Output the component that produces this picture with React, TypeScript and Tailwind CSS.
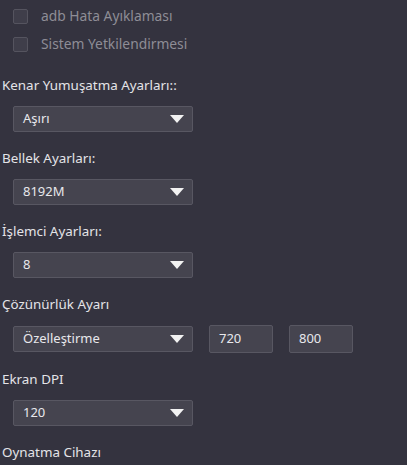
import React from 'react';

const font = { fontFamily: '"Noto Sans", "Open Sans", sans-serif' };

function Arrow() {
  return (
    <svg width="14" height="8" viewBox="0 0 14 8" className="shrink-0">
      <path d="M0 0 L14 0 L7 8 Z" fill="#f2f2f2" />
    </svg>
  );
}

function Select({ value }: { value: string }) {
  return (
    <div className="w-[180px] h-[26px] bg-[#45444f] border border-[#585762] rounded-[2px] flex items-center justify-between pl-[9px] pr-[8px]">
      <span className="text-[13px] text-[#e8e8ec]">{value}</span>
      <Arrow />
    </div>
  );
}

function Check({ label }: { label: string }) {
  return (
    <div className="flex items-center h-[16px] gap-[13px] pl-[13px]">
      <div className="w-[15px] h-[15px] rounded-[2px] bg-[#3f3e4a] border border-[#55545f]" />
      <span className="text-[13.8px] text-[#8e8d96]">{label}</span>
    </div>
  );
}

function Field({ label, children }: { label: string; children: React.ReactNode }) {
  return (
    <div className="flex flex-col">
      <div className="h-[18px] flex items-center pl-[2px] text-[13.4px] text-[#e4e4e8]">{label}</div>
      <div className="pl-[13px] pt-[12px] pb-[17px]">{children}</div>
    </div>
  );
}

function NumBox({ value }: { value: string }) {
  return (
    <div className="w-[64px] h-[28px] bg-[#45444f] border border-[#585762] rounded-[2px] flex items-center pl-[9px] text-[13px] text-[#e8e8ec]">
      {value}
    </div>
  );
}

export default function App() {
  return (
    <div className="w-[407px] h-[465px] overflow-hidden bg-[#34333f]" style={font}>
      <div className="flex flex-col gap-[12px] pt-[8px]">
        <Check label="adb Hata Ayıklaması" />
        <Check label="Sistem Yetkilendirmesi" />
      </div>
      <div className="flex flex-col pt-[24px]">
        <Field label="Kenar Yumuşatma Ayarları::">
          <Select value="Aşırı" />
        </Field>
        <Field label="Bellek Ayarları:">
          <Select value="8192M" />
        </Field>
        <Field label="İşlemci Ayarları:">
          <Select value="8" />
        </Field>
        <Field label="Çözünürlük Ayarı">
          <div className="flex items-center gap-[16px]">
            <Select value="Özelleştirme" />
            <NumBox value="720" />
            <NumBox value="800" />
          </div>
        </Field>
        <Field label="Ekran DPI">
          <Select value="120" />
        </Field>
        <Field label="Oynatma Cihazı">
          <div />
        </Field>
      </div>
    </div>
  );
}
